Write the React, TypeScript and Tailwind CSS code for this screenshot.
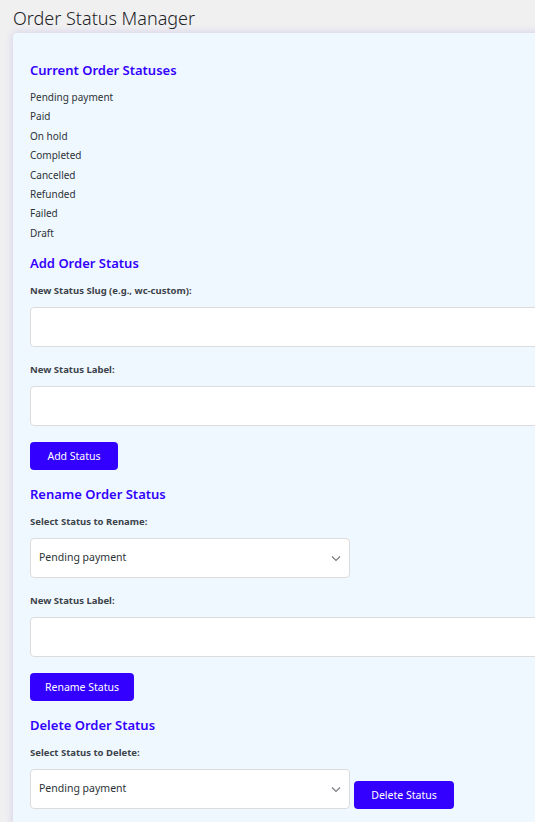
import React from "react";

const statuses = [
  "Pending payment",
  "Paid",
  "On hold",
  "Completed",
  "Cancelled",
  "Refunded",
  "Failed",
  "Draft",
];

const font = { fontFamily: '"Noto Sans", "Open Sans", Arial, sans-serif' };

const SectionTitle: React.FC<{ children: React.ReactNode; className?: string }> = ({
  children,
  className = "",
}) => (
  <h2 className={`text-[13px] leading-[20px] font-semibold text-[#3300ff] ${className}`}>
    {children}
  </h2>
);

const FieldLabel: React.FC<{ children: React.ReactNode; className?: string }> = ({
  children,
  className = "",
}) => (
  <label className={`block text-[9.5px] leading-[16px] font-bold text-[#3c434a] ${className}`}>
    {children}
  </label>
);

const TextInput: React.FC<{ className?: string }> = ({ className = "" }) => (
  <input
    type="text"
    className={`block h-[40px] w-full rounded-[4px] border border-[#dcdcde] bg-white px-2 text-[11px] outline-none ${className}`}
  />
);

const StatusSelect: React.FC = () => (
  <div className="relative h-[40px] w-[320px] shrink-0 rounded-[4px] border border-[#dcdcde] bg-white">
    <div className="flex h-full items-center pl-[8px] text-[10.5px] text-[#2c3338]">
      Pending payment
    </div>
    <svg
      className="absolute right-[8px] top-[16px]"
      width="10"
      height="7"
      viewBox="0 0 10 7"
      fill="none"
    >
      <path d="M1 1.5 5 5.5 9 1.5" stroke="#787c82" strokeWidth="1.2" />
    </svg>
  </div>
);

const PrimaryButton: React.FC<{ children: React.ReactNode; className?: string }> = ({
  children,
  className = "",
}) => (
  <button
    type="button"
    className={`block h-[28px] shrink-0 whitespace-nowrap rounded-[4px] bg-[#3300ff] text-center text-[10.5px] leading-[28px] text-white ${className}`}
  >
    {children}
  </button>
);

export default function App() {
  return (
    <div className="min-h-screen w-[535px] overflow-hidden bg-[#f0f0f1]" style={font}>
      <div className="pl-[13px] pt-[6px]">
        <h1 className="h-[24px] text-[18px] font-light leading-[24px] text-[#1d2327]">
          Order Status Manager
        </h1>

        <div className="mt-[3px] w-[760px] rounded-[4px] bg-[#f0f8ff] pl-[17px] pt-[27px] pb-[20px] shadow-[0_0_8px_rgba(80,40,200,0.18)]">
          <SectionTitle>Current Order Statuses</SectionTitle>
          <ul className="mt-[8px] text-[10px] leading-[19.4px] text-[#2c3338]">
            {statuses.map((s) => (
              <li key={s}>{s}</li>
            ))}
          </ul>

          <SectionTitle className="mt-[10px]">Add Order Status</SectionTitle>
          <FieldLabel className="mt-[10px]">New Status Slug (e.g., wc-custom):</FieldLabel>
          <TextInput className="mt-[8px]" />
          <FieldLabel className="mt-[15px]">New Status Label:</FieldLabel>
          <TextInput className="mt-[8px]" />
          <PrimaryButton className="mt-[16px] w-[88px]">Add Status</PrimaryButton>

          <SectionTitle className="mt-[14px]">Rename Order Status</SectionTitle>
          <FieldLabel className="mt-[10px]">Select Status to Rename:</FieldLabel>
          <div className="mt-[8px]">
            <StatusSelect />
          </div>
          <FieldLabel className="mt-[15px]">New Status Label:</FieldLabel>
          <TextInput className="mt-[8px]" />
          <PrimaryButton className="mt-[16px] w-[104px]">Rename Status</PrimaryButton>

          <SectionTitle className="mt-[14px]">Delete Order Status</SectionTitle>
          <FieldLabel className="mt-[10px]">Select Status to Delete:</FieldLabel>
          <div className="mt-[8px] flex items-end gap-[4px]">
            <StatusSelect />
            <PrimaryButton className="w-[100px]">Delete Status</PrimaryButton>
          </div>
        </div>
      </div>
    </div>
  );
}
